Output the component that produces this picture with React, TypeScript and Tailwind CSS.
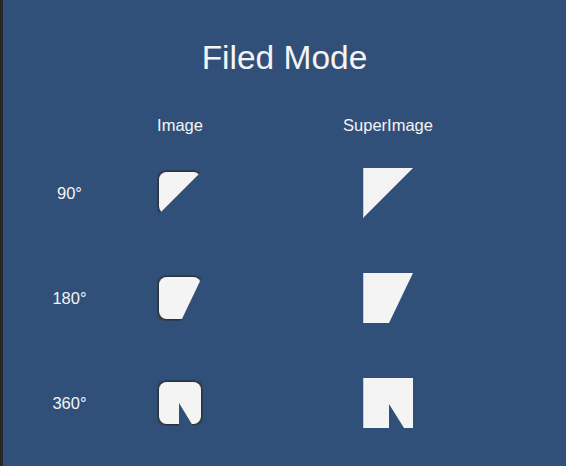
const rows = [
    { label: "90°", image: "0,0 46,0 0,46", superImage: "0,0 50,0 0,50" },
    { label: "180°", image: "0,0 46,0 24,46 0,46", superImage: "0,0 50,0 26,50 0,50" },
    { label: "360°", image: "0,0 46,0 46,46 36,46 22,23 22,46 0,46", superImage: "0,0 50,0 50,50 41,50 26,26 26,50 0,50" },
]

// Unity-style rounded sprite, cut by the fill polygon
const RoundedSprite = ({ id, points }: { id: string; points: string }) => {
    return (
        <svg width="46" height="46" viewBox="0 0 46 46">
            <defs>
                <clipPath id={`clip-${id}`}>
                    <polygon points={points} />
                </clipPath>
                <filter id={`blur-${id}`} x="-20%" y="-20%" width="140%" height="140%">
                    <feGaussianBlur stdDeviation="0.9" />
                </filter>
            </defs>
            <g clipPath={`url(#clip-${id})`}>
                <rect x="0.5" y="0.5" width="45" height="45" rx="9" fill="#2e2e2e" filter={`url(#blur-${id})`} />
                <rect x="2" y="2" width="42" height="42" rx="7.5" fill="#f4f4f4" />
            </g>
        </svg>
    )
}

const FlatSprite = ({ points }: { points: string }) => {
    return (
        <svg width="50" height="50" viewBox="0 0 50 50">
            <polygon points={points} fill="#f4f4f4" />
            <line x1="0.5" y1="0" x2="0.5" y2="50" stroke="#c9c9c9" strokeWidth="1" />
        </svg>
    )
}

const App = () => {
    return (
        <div className="flex w-[566px] h-[466px] overflow-hidden font-['Liberation_Sans',Arial,sans-serif] text-[#f4f4f4]">
            <div className="w-[3px] bg-[#282828]" />

            <div className="flex-1 bg-[#30507a] flex flex-col">
                <h1 className="mt-[39px] text-center text-[33.5px] leading-[38px]">Filed Mode</h1>

                <div className="mt-[38px] grid grid-cols-[133px_88px_328px] text-[16.5px] leading-[20px]">
                    <div />
                    <div className="text-center">Image</div>
                    <div className="text-center">SuperImage</div>
                </div>

                <div className="mt-[5px] flex flex-col">
                    {rows.map((row, i) => (
                        <div key={row.label} className="grid grid-cols-[133px_88px_328px] h-[105px] items-center text-[16.5px] leading-[20px]">
                            <div className="text-center">{row.label}</div>
                            <div className="flex justify-center">
                                <RoundedSprite id={`img${i}`} points={row.image} />
                            </div>
                            <div className="flex justify-center">
                                <FlatSprite points={row.superImage} />
                            </div>
                        </div>
                    ))}
                </div>
            </div>
        </div>
    )
}

export default App;
